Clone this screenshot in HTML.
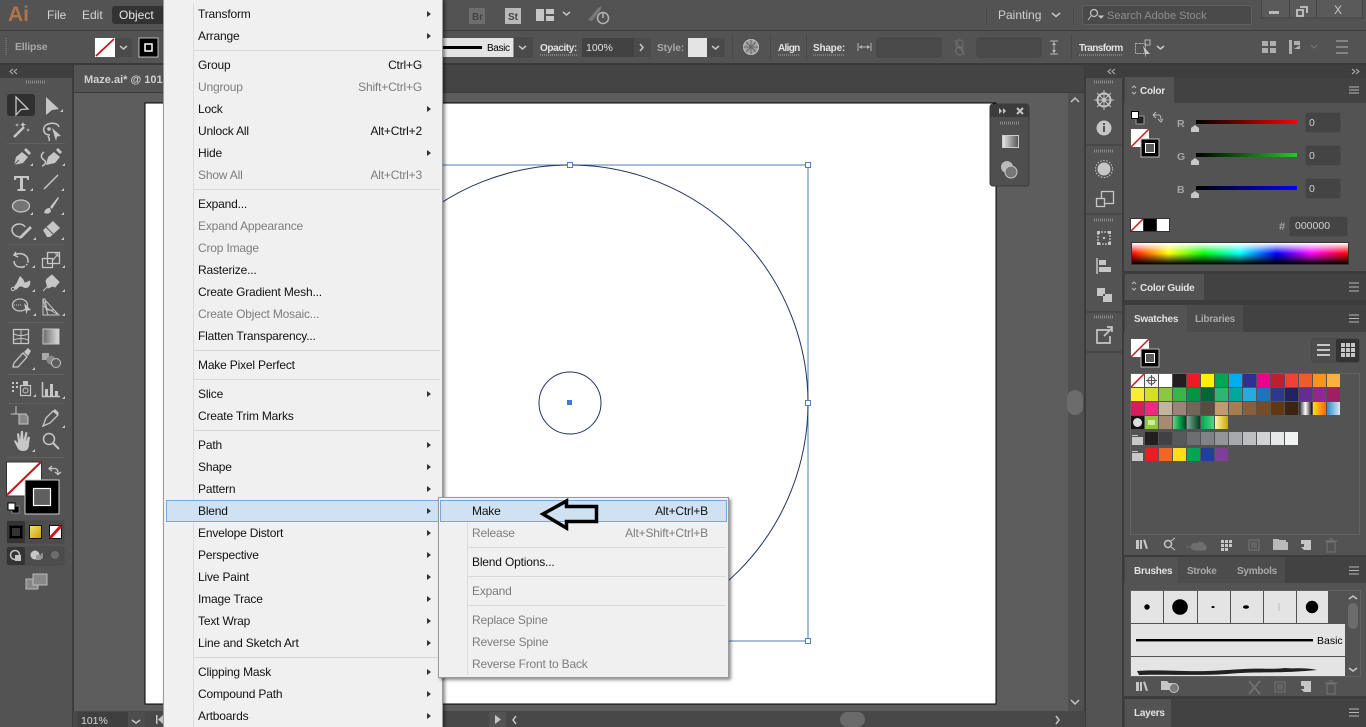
<!DOCTYPE html>
<html><head><meta charset="utf-8"><title>Illustrator</title>
<style>
html,body{margin:0;padding:0;width:1366px;height:727px;overflow:hidden;background:#535353}
svg{display:block;font-family:"Liberation Sans",sans-serif}
.m text{font-size:12px;fill:#111;letter-spacing:-.18px}
.m text.d{fill:#7d7d7d}
.m text.r{text-anchor:end}
.p{font-size:10px;font-weight:bold;fill:#e2e2e2;letter-spacing:-.25px}
.q{font-size:10px;font-weight:bold;fill:#a9a9a9;letter-spacing:-.25px}
.c{font-size:10.5px;fill:#d2d2d2}
.i{fill:none;stroke:#c6c6c6;stroke-width:1.5}
.f{fill:#c6c6c6}
.dim{fill:#777}
</style></head><body>
<svg width="1366" height="727" viewBox="0 0 1366 727" xmlns="http://www.w3.org/2000/svg">
<defs>
<linearGradient id="gr" x1="0" x2="1" y1="0" y2="0"><stop offset="0" stop-color="#000"/><stop offset="1" stop-color="#f00"/></linearGradient>
<linearGradient id="gg" x1="0" x2="1" y1="0" y2="0"><stop offset="0" stop-color="#000"/><stop offset="1" stop-color="#2c2"/></linearGradient>
<linearGradient id="gb" x1="0" x2="1" y1="0" y2="0"><stop offset="0" stop-color="#000"/><stop offset="1" stop-color="#00f"/></linearGradient>
<linearGradient id="hue" x1="0" x2="1" y1="0" y2="0"><stop offset="0" stop-color="#f00"/><stop offset=".17" stop-color="#ff0"/><stop offset=".33" stop-color="#0f0"/><stop offset=".5" stop-color="#0ff"/><stop offset=".67" stop-color="#00f"/><stop offset=".83" stop-color="#f0f"/><stop offset="1" stop-color="#f00"/></linearGradient>
<linearGradient id="wb" x1="0" x2="0" y1="0" y2="1"><stop offset="0" stop-color="#fff"/><stop offset=".5" stop-color="#fff" stop-opacity="0"/><stop offset=".5" stop-color="#000" stop-opacity="0"/><stop offset="1" stop-color="#000"/></linearGradient>
<linearGradient id="bw" x1="0" x2="1" y1="0" y2="0"><stop offset="0" stop-color="#222"/><stop offset=".5" stop-color="#fff"/><stop offset="1" stop-color="#111"/></linearGradient>
<linearGradient id="yo" x1="0" x2="1" y1="0" y2="0"><stop offset="0" stop-color="#ffe000"/><stop offset="1" stop-color="#f26522"/></linearGradient>
<linearGradient id="bt" x1="0" x2="1" y1="0" y2="0"><stop offset="0" stop-color="#2b8ad0"/><stop offset="1" stop-color="#dfe8ef"/></linearGradient>
<linearGradient id="gn" x1="0" x2="1" y1="0" y2="0"><stop offset="0" stop-color="#7ccb7c"/><stop offset=".5" stop-color="#00a651"/><stop offset="1" stop-color="#00451f"/></linearGradient>
<linearGradient id="tl" x1="0" x2="1" y1="0" y2="0"><stop offset="0" stop-color="#7aa894"/><stop offset="1" stop-color="#00401f"/></linearGradient>
<linearGradient id="gn2" x1="0" x2="1" y1="0" y2="0"><stop offset="0" stop-color="#00a651"/><stop offset="1" stop-color="#5fcf88"/></linearGradient>
<linearGradient id="yl" x1="0" x2="1" y1="0" y2="0"><stop offset="0" stop-color="#fff6b0"/><stop offset="1" stop-color="#c9a800"/></linearGradient>
<linearGradient id="yy" x1="0" x2="1" y1="0" y2="1"><stop offset="0" stop-color="#f7e27a"/><stop offset="1" stop-color="#c9a000"/></linearGradient>
<linearGradient id="gy" x1="0" x2="1" y1="0" y2="0"><stop offset="0" stop-color="#e8e8e8"/><stop offset="1" stop-color="#555"/></linearGradient>
<linearGradient id="gy2" x1="0" x2="1" y1="0" y2="0"><stop offset="0" stop-color="#6a6a6a"/><stop offset="1" stop-color="#ddd"/></linearGradient>
<filter id="sh" x="-10%" y="-10%" width="120%" height="120%"><feDropShadow dx="2" dy="2" stdDeviation="1.5" flood-color="#000" flood-opacity=".45"/></filter>
</defs>

<!-- base bars -->
<rect width="1366" height="727" fill="#535353"/>
<rect y="30" width="1366" height="1" fill="#3c3c3c"/>
<rect y="63" width="1366" height="2" fill="#3a3a3a"/>

<!-- canvas region -->
<rect x="73" y="65" width="1012" height="28" fill="#444"/>
<rect x="74" y="65" width="100" height="27" fill="#535353"/>
<rect x="73" y="92" width="1012" height="1" fill="#3c3c3c"/>
<rect x="73" y="93" width="995" height="618" fill="#5d5d5d"/>
<rect x="1068" y="93" width="17" height="618" fill="#505050"/>
<rect x="72" y="65" width="2" height="662" fill="#3c3c3c"/>
<rect x="1084" y="65" width="2" height="662" fill="#3c3c3c"/>
<rect x="73" y="711" width="1012" height="16" fill="#484848"/>
<rect x="145" y="103" width="851" height="601" fill="#fff" stroke="#000" stroke-width="1"/>
<text x="84" y="83" font-size="11" font-weight="bold" fill="#d0d0d0">Maze.ai* @ 101</text>

<!-- artwork -->
<g fill="none">
<rect x="332" y="165" width="476" height="476" stroke="#4f7fbc" stroke-width="1"/>
<circle cx="570" cy="403" r="238" stroke="#22335f" stroke-width="1"/>
<circle cx="570" cy="403" r="31" stroke="#22335f" stroke-width="1"/>
</g>
<g fill="#fff" stroke="#4f7fbc"><rect x="567.500" y="162.500" width="5" height="5"/><rect x="805.500" y="162.500" width="5" height="5"/><rect x="805.500" y="400.500" width="5" height="5"/><rect x="805.500" y="638.500" width="5" height="5"/></g>
<rect x="567" y="400" width="5" height="5" fill="#3f78e0"/>

<!-- scrollbars -->
<path d="M1071 102l4-4 4 4" class="i" stroke-width="1.2"/>
<path d="M1071 700l4 4 4-4" class="i" stroke-width="1.2"/>
<rect x="1067" y="390" width="16" height="25" rx="8" fill="#6c6c6c"/>
<rect x="78" y="712" width="50" height="15" fill="#3f3f3f"/>
<text x="81" y="724" font-size="10.500" fill="#d8d8d8">101%</text>
<rect x="128" y="712" width="17" height="15" fill="#4d4d4d"/>
<path d="M132 720l4 3 4-3" class="i" stroke-width="1.300"/>
<path d="M156 715v9h1.500v-9zM163 715l-5 4.500 5 4.500z" class="f"/>
<rect x="489" y="712" width="17" height="15" fill="#535353"/>
<path d="M495 715l6 4.500-6 4.500z" class="f"/>
<path d="M516 716l-3 4 3 4" class="i" stroke-width="1.200"/>
<path d="M1056 716l3 4-3 4" class="i" stroke-width="1.200"/>
<rect x="840" y="712" width="25" height="15" rx="7.500" fill="#6a6a6a"/>

<!-- top bar -->
<text x="8" y="21" font-size="21" font-weight="bold" fill="#b0744a">Ai</text>
<text x="47" y="19" font-size="12" fill="#d4d4d4">File</text>
<text x="82" y="19" font-size="12" fill="#d4d4d4">Edit</text>
<rect x="112" y="6" width="55" height="18" rx="3" fill="#333"/>
<text x="119" y="19" font-size="12" fill="#e6e6e6">Object</text>
<rect x="469" y="8" width="16" height="16" fill="#6d6d6d"/>
<text x="472" y="20" font-size="10" font-weight="bold" fill="#444">Br</text>
<rect x="505" y="8" width="16" height="16" fill="#b9b9b9"/>
<text x="508" y="20" font-size="10" font-weight="bold" fill="#444">St</text>
<path d="M536 9h8v12h-8zM546 9h8v5h-8zM546 16h8v5h-8z" class="f"/>
<path d="M563 12l3.500 3 3.500-3" class="i" stroke-width="1.300"/>
<path d="M588 20l10-12 4-2-2 5-8 10z" class="dim"/><circle cx="603" cy="18" r="5.500" fill="none" stroke="#b5b5b5" stroke-width="1.500"/><path d="M603 12v6" stroke="#b5b5b5" stroke-width="1.500"/>
<rect x="986" y="8" width="1" height="17" fill="#484848"/>
<text x="998" y="19" font-size="12" fill="#cfcfcf">Painting</text>
<path d="M1052 13l4 3.500 4-3.500" class="i" stroke-width="1.300"/>
<rect x="1073" y="8" width="1" height="17" fill="#484848"/>
<rect x="1082.500" y="5.500" width="169" height="19" rx="2" fill="#4a4a4a" stroke="#5f5f5f"/>
<circle cx="1094" cy="13" r="3.500" fill="none" stroke="#c4c4c4" stroke-width="1.200"/><path d="M1091 16l-3 4M1099 16h4l-2 2z" stroke="#c4c4c4" fill="#c4c4c4"/>
<text x="1107" y="19" font-size="11" fill="#8e8e8e">Search Adobe Stock</text>
<rect x="1261.500" y="-1" width="101" height="19" fill="#5a5a5a" stroke="#444"/>
<path d="M1289.500 0v18M1316.500 0v18" stroke="#444"/>
<rect x="1269" y="11" width="10" height="3" fill="#b8b8b8"/>
<path d="M1300 7h7v6M1297 10h6v6h-6z" fill="none" stroke="#c4c4c4" stroke-width="1.800"/>
<text x="1334" y="14" font-size="12" fill="#c8c8c8">X</text>

<!-- control bar -->
<path d="M6 38v18" stroke="#6e6e6e" stroke-width="2" stroke-dasharray="1 1"/>
<text x="15" y="50" font-size="10.500" font-weight="bold" fill="#a8a8a8" letter-spacing="-.2">Ellipse</text>
<rect x="95" y="38" width="20" height="19" fill="#fff"/><path d="M96 56l18-17" stroke="#c4161c" stroke-width="1.800"/>
<rect x="115" y="38" width="17" height="19" fill="#4a4a4a"/>
<path d="M120 46l3.500 3 3.500-3" class="i" stroke-width="1.300"/>
<rect x="139" y="38" width="19" height="19" fill="#000" stroke="#ddd" stroke-width=".8"/><rect x="145" y="44" width="7" height="7" fill="none" stroke="#fff" stroke-width="1.500"/>
<rect x="443" y="38" width="71" height="19" fill="#e4e4e4"/><rect x="443" y="46" width="39" height="3" fill="#000"/>
<text x="487" y="51" font-size="10" fill="#000" textLength="23">Basic</text>
<rect x="514" y="38" width="18" height="19" fill="#4a4a4a" stroke="#444"/><path d="M519 46l3.500 3 3.500-3" class="i" stroke-width="1.300"/>
<text x="540" y="51" class="p" textLength="37">Opacity:</text>
<path d="M540 55h37" stroke="#aaa" stroke-dasharray="1 1"/>
<rect x="582" y="38" width="52" height="19" fill="#424242"/>
<text x="586" y="51" font-size="10.500" fill="#e2e2e2">100%</text>
<rect x="634" y="38" width="17" height="19" fill="#4b4b4b"/><path d="M640 44l3 3.500-3 3.500" class="i" stroke-width="1.300"/>
<text x="657" y="51" class="q" textLength="27">Style:</text>
<rect x="688" y="38" width="19" height="19" fill="#e4e4e4"/>
<rect x="707" y="38" width="18" height="19" fill="#4a4a4a"/><path d="M712 46l3.500 3 3.500-3" class="i" stroke-width="1.300"/>
<rect x="732" y="34" width="1" height="26" fill="#484848"/>
<circle cx="751" cy="47" r="7.500" fill="#a0a0a0" stroke="#c8c8c8"/><path d="M743.500 47h15M751 39.500v15M746 42l10 10M756 42l-10 10" stroke="#666"/>
<rect x="770" y="34" width="1" height="26" fill="#484848"/>
<text x="778" y="51" class="p" textLength="22">Align</text><path d="M778 55h22" stroke="#aaa" stroke-dasharray="1 1"/>
<rect x="806" y="34" width="1" height="26" fill="#484848"/>
<text x="813" y="51" class="p" textLength="32">Shape:</text><path d="M813 55h32" stroke="#aaa" stroke-dasharray="1 1"/>
<path d="M858 43v8M871 43v8M859 47h11" stroke="#b5b5b5"/><path d="M859 47l3-2v4zM870 47l-3-2v4z" fill="#b5b5b5"/>
<rect x="877" y="38" width="64" height="19" rx="2" fill="#4a4a4a" stroke="#444"/>
<path d="M955 40l10 15" stroke="#707070" stroke-width="1"/><rect x="956" y="40" width="7" height="8" rx="3" fill="none" stroke="#707070"/><rect x="956" y="47" width="7" height="8" rx="3" fill="none" stroke="#707070"/>
<rect x="977" y="38" width="64" height="19" rx="2" fill="#4a4a4a" stroke="#444"/>
<path d="M1050 41h8M1050 54h8M1054 41v13" stroke="#b5b5b5"/><path d="M1054 42l-2 3h4zM1054 53l-2-3h4z" fill="#b5b5b5"/>
<rect x="1071" y="34" width="1" height="26" fill="#484848"/>
<text x="1079" y="51" class="p" textLength="44">Transform</text><path d="M1079 55h44" stroke="#aaa" stroke-dasharray="1 1"/>
<rect x="1135.500" y="43.500" width="10" height="10" fill="none" stroke="#b5b5b5" stroke-dasharray="2 1"/><path d="M1143 46l7 8-4 0 0 4z" class="f"/><rect x="1145" y="40" width="5" height="5" fill="none" stroke="#b5b5b5"/>
<path d="M1157 46l3.500 3 3.500-3" class="i" stroke-width="1.300"/>
<path d="M1262 41h6v5h-6zM1270 41h6v5h-6zM1262 48h6v5h-6zM1270 48h6v5h-6z" class="f" opacity=".8"/>
<path d="M1289 40h3v14h-3zM1294 41h6v4h-6zM1294 49h6v-4" class="f" opacity=".8"/>
<path d="M1311 45l3 3 3-3" stroke="#777" fill="none"/>
<path d="M1336 41h12M1336 47h12M1336 53h12" stroke="#b5b5b5"/>

<!-- left toolbar -->
<rect y="65" width="72" height="13" fill="#3f3f3f"/>
<path d="M13 69l-3 2.500 3 2.500M17 69l-3 2.500 3 2.500" stroke="#b5b5b5" fill="none"/>
<path d="M26 82h20" stroke="#8a8a8a" stroke-width="3" stroke-dasharray="1 1"/>
<rect x="7" y="94" width="28" height="22" rx="3" fill="#303030"/>
<path d="M16 97l12 12-7 .5-5 5.500z" fill="none" stroke="#c8c8c8" stroke-width="1.300"/>
<path d="M46 97l13 12-7 1-6 5z" class="f"/>
<path d="M60 112l3-3v3z" class="f"/>
<!-- wand -->
<path d="M14 137l10-10" stroke="#c6c6c6" stroke-width="2.500"/><path d="M23 122l1 2 2 .5-2 1-1 2-1-2-2-1 2-.5zM17 123l.5 1.500 1.500.5-1.500.5-.5 1.500-.5-1.500-1.500-.5 1.500-.5zM28 128l.5 1.500 1.500.5-1.500.5-.5 1.500-.5-1.500-1.500-.5 1.500-.5z" class="f"/>
<!-- lasso -->
<path d="M50 135c-7 0-8-7-4-10 5-3 12-2 13 2M48 136c1 2 2 3 1 5" class="i"/><circle cx="49" cy="129" r="1.800" class="f"/><path d="M52 128l9 8-4 .5-1 4.500z" class="f"/>
<rect x="7" y="143" width="58" height="1" fill="#606060"/>
<!-- pen -->
<path d="M14 165l2-8 6-5 6 5-5 6zM24 150l2-2 5 5-2 2z" class="f"/><path d="M14 165l5-5" stroke="#535353"/><path d="M30 166l3-3v3z" class="f"/>
<path d="M46 165l2-8 6-5 6 5-5 6zM56 150l2-2 4 4-2 2z" class="f"/><path d="M44 152c-4 3-3 6 0 8s1 5-2 6" class="i"/><path d="M62 166l3-3v3z" class="f"/>
<!-- type -->
<path d="M14 176h15v4h-1.500l-1-2H23v11h2.500v2h-8v-2H20v-11h-3.500l-1 2H14z" class="f"/><path d="M30 191l3-3v3z" class="f"/>
<path d="M44 189l14-14" class="i"/><path d="M61 191l3-3v3z" class="f"/>
<!-- ellipse & brush -->
<ellipse cx="21" cy="206" rx="8.500" ry="6" fill="#757575" stroke="#c6c6c6" stroke-width="1.300"/><path d="M30 215l3-3v3z" class="f"/>
<path d="M44 213c1-4 3-5 6-5l1 3c-1 3-4 3-7 2zM50 207l8-10 1 1-7 11z" class="f"/><path d="M61 215l3-3v3z" class="f"/>
<!-- shaper & eraser -->
<path d="M21 237c-7 0-9-5-9-7 0-4 4-6 7-6s5 1 6 3" class="i" stroke-width="2"/><path d="M20 236l10-10 2 2-10 10-3 1z" class="f"/><path d="M33 240l3-3v3z" class="f"/>
<path d="M43 230l10-9 7 7-10 9h-3z" class="f"/><path d="M46 227l7 7" stroke="#535353"/><path d="M61 240l3-3v3z" class="f"/>
<rect x="7" y="244" width="58" height="1" fill="#606060"/>
<!-- rotate & scale -->
<path d="M16 252l-2 3 4 2M14 255c6-3 14-1 14 6 0 4-4 7-8 6-4 0-6-3-6-6" class="i" stroke-dasharray="20 1.500 1.500 1.500"/><path d="M32 268l3-3v3z" class="f"/>
<rect x="42.500" y="258.500" width="10" height="9" fill="none" stroke="#c6c6c6" stroke-width="1.300"/><rect x="47.500" y="252.500" width="12" height="11" fill="none" stroke="#c6c6c6" stroke-width="1.300"/><path d="M53 260l5-6M55 254h3v3" stroke="#c6c6c6" fill="none"/><path d="M62 268l3-3v3z" class="f"/>
<!-- warp & pin -->
<path d="M14 288c0-3 3-4 4-8l2-4 3 3 2 4 5-2c1 3-1 7-4 7s-4-3-7-1l-3 3z" class="f"/><path d="M13 289l17-8" stroke="#c6c6c6"/><circle cx="13" cy="289" r="1.700" fill="#535353" stroke="#c6c6c6"/><path d="M32 292l3-3v3z" class="f"/>
<path d="M43 291l6-6M47 279l5-4 7 7-4 5-2-1-5 2-2-7z" class="f" stroke="#c6c6c6"/><path d="M62 292l3-3v3z" class="f"/>
<!-- shape builder & perspective -->
<ellipse cx="20" cy="305" rx="7.500" ry="6" fill="none" stroke="#c6c6c6" stroke-width="1.300"/><path d="M14 305h8" stroke="#c6c6c6" stroke-dasharray="1 1"/><path d="M24 303l7 7-3.500.5-1 4z" class="f"/><path d="M33 316l3-3v3z" class="f"/>
<path d="M43 299v16h16l-5-5H47l-2-11zM43 299l5 16M43 306l14 8M46 301l8 9" fill="none" stroke="#c6c6c6"/><path d="M62 316l3-3v3z" class="f"/>
<rect x="7" y="322" width="58" height="1" fill="#606060"/>
<!-- mesh & gradient -->
<rect x="13.500" y="329.500" width="15" height="14" fill="none" stroke="#c6c6c6" stroke-width="1.300"/><path d="M21 330v13M14 334c4 2 10 2 14 0M14 340c4-2 10-2 14 0" stroke="#c6c6c6" fill="none"/>
<rect x="43" y="329" width="16" height="15" fill="url(#gy2)" stroke="#c6c6c6"/>
<!-- eyedropper & blend -->
<path d="M13 367l1-4 9-10 4 4-9 10z" fill="none" stroke="#c6c6c6" stroke-width="1.300"/><path d="M24 352l4-4 3 3-3 5z" class="f"/><path d="M32 370l3-3v3z" class="f"/>
<rect x="42" y="353" width="7" height="7" fill="#aaa"/><circle cx="51" cy="360" r="4.500" fill="#888"/><circle cx="56" cy="363" r="4.500" fill="#5d5d5d" stroke="#c6c6c6"/>
<rect x="7" y="374" width="58" height="1" fill="#606060"/>
<!-- sprayer & graph -->
<path d="M12 382h2v2h-2zM16 382h2v2h-2zM12 386h2v2h-2zM16 386h2v2h-2zM12 390h2v2h-2z" class="f"/><rect x="20.500" y="385.500" width="10" height="10" fill="none" stroke="#c6c6c6" stroke-width="1.200"/><path d="M23 381h5v4h-5z" class="f"/><circle cx="25.500" cy="390.500" r="2.500" fill="none" stroke="#c6c6c6"/><path d="M33 397l3-3v3z" class="f"/>
<path d="M42.500 382v14.500H60" class="i"/><path d="M45 389h3v7h-3zM50 384h3v12h-3zM55 391h3v5h-3z" class="f"/><path d="M62 399l3-3v3z" class="f"/>
<rect x="7" y="403" width="58" height="1" fill="#606060"/>
<!-- artboard & slice -->
<path d="M16 406v8M11 414h8" stroke="#c6c6c6"/><path d="M19 414h7l2 3v7h-9z" fill="#888" stroke="#c6c6c6"/>
<path d="M43 426l3-8 7-7 5 4-8 8z" fill="none" stroke="#c6c6c6" stroke-width="1.300"/><path d="M53 411l2-2 4 4-2 2z" class="f"/><path d="M62 428l3-3v3z" class="f"/>
<!-- hand & zoom -->
<path d="M14 441l1-1 3 3-1-9 2-1 1 7 1-9h2l.5 9 2-8 2 .5-1.500 9 2-5 2 .5-1 7c0 5-2 7-6 7s-5-2-6-4z" class="f"/><path d="M32 452l3-3v3z" class="f"/>
<circle cx="49" cy="439" r="5.500" fill="none" stroke="#c6c6c6" stroke-width="1.500"/><path d="M53 443l6 6" stroke="#c6c6c6" stroke-width="2"/>
<rect x="7" y="457" width="58" height="1" fill="#606060"/>
<!-- fill/stroke -->
<rect x="6.500" y="462" width="35" height="34" fill="#fff" stroke="#333"/>
<path d="M7 495l34-33" stroke="#c4161c" stroke-width="2"/>
<path d="M52 466l-3 2.500 3 2.500M49 468.500h6c2 0 3 2 3 5M55 472l3 2.500 3-2.500" fill="none" stroke="#c6c6c6" stroke-width="1.300"/>
<rect x="25" y="480" width="34" height="34" fill="#000" stroke="#ccc"/>
<rect x="33.500" y="488.500" width="17" height="17" fill="#5f5f5f" stroke="#fff" stroke-width="1.200"/>
<rect x="12" y="506" width="7" height="7" fill="#000" stroke="#999" stroke-width=".7"/><rect x="8" y="503" width="7" height="7" fill="#fff" stroke="#000"/>
<!-- colour modes -->
<rect x="7" y="521" width="57" height="22" rx="2" fill="#4c4c4c" stroke="#484848"/>
<rect x="7" y="521" width="18" height="22" rx="2" fill="#343434"/>
<rect x="9.500" y="525.500" width="13" height="13" fill="#000" stroke="#222"/><rect x="12" y="528" width="8" height="8" fill="#333"/>
<rect x="29.500" y="525.500" width="12" height="13" fill="url(#yy)" stroke="#111"/>
<rect x="49.500" y="525.500" width="12" height="13" fill="#fff" stroke="#111"/><path d="M50 538l11-12" stroke="#d2141c" stroke-width="3"/>
<!-- draw modes -->
<rect x="7" y="547" width="57" height="18" rx="2" fill="#4c4c4c" stroke="#484848"/>
<rect x="7" y="547" width="18" height="18" rx="2" fill="#343434"/>
<circle cx="15" cy="555" r="4.500" fill="none" stroke="#c6c6c6" stroke-width="1.500"/><rect x="15" y="555" width="6" height="6" class="f"/>
<circle cx="35" cy="555" r="4.500" class="f"/><path d="M37 558h5v-5" fill="none" stroke="#c6c6c6"/><rect x="36" y="555" width="5" height="5" fill="#999"/>
<circle cx="55" cy="555" r="4" fill="#6d6d6d"/>
<!-- screen mode -->
<rect x="26" y="579" width="12" height="10" fill="#888" stroke="#bbb"/><rect x="33" y="574" width="14" height="11" fill="#888" stroke="#bbb"/>

<!-- right dock -->
<rect x="1086" y="65" width="280" height="13" fill="#3e3e3e"/>
<path d="M1111 69l-3 2.500 3 2.500M1115 69l-3 2.500 3 2.500M1352 69l3 2.500-3 2.500M1356 69l3 2.500-3 2.500" stroke="#b5b5b5" fill="none"/>
<rect x="1122" y="78" width="2" height="649" fill="#3c3c3c"/>
<path d="M1094 82h20M1094 151h20M1094 220h20M1094 317h20" stroke="#8a8a8a" stroke-width="3" stroke-dasharray="1 1"/>
<path d="M1086 145h36M1086 214h36M1086 312h36M1086 352h36" stroke="#3c3c3c"/>
<!-- wheel -->
<circle cx="1104" cy="100" r="6.500" fill="none" stroke="#c6c6c6" stroke-width="2"/><circle cx="1104" cy="100" r="2" class="f"/><path d="M1104 90v20M1094 100h20M1097 93l14 14M1111 93l-14 14" stroke="#c6c6c6"/>
<circle cx="1104" cy="128" r="7.500" class="f"/><path d="M1103 126h2v6h-2zM1103 123h2v2h-2z" fill="#535353"/>
<circle cx="1104" cy="169" r="6.500" class="f"/><circle cx="1104" cy="169" r="8.500" fill="none" stroke="#c6c6c6" stroke-dasharray="1.500 1.500"/>
<rect x="1101.500" y="191.500" width="12" height="12" fill="none" stroke="#c6c6c6" stroke-width="1.300"/><rect x="1096.500" y="198.500" width="8" height="8" fill="#535353" stroke="#c6c6c6" stroke-width="1.300"/>
<rect x="1098" y="232" width="12" height="12" fill="none" stroke="#c6c6c6" stroke-dasharray="2 1" stroke-width="1.300"/><path d="M1097 231h3v3h-3zM1108 231h3v3h-3zM1097 242h3v3h-3zM1108 242h3v3h-3zM1103 237h2v2h-2z" class="f"/>
<path d="M1097 258v16" class="i"/><path d="M1099 260h7v5h-7zM1099 267h12v5h-12z" class="f"/>
<path d="M1097 288h8v8h-8z" class="f"/><path d="M1103 294h9v8h-9z" class="f"/><rect x="1103" y="294" width="2" height="2" fill="#535353"/>
<path d="M1110 330h-13v13h13v-7M1104 336l8-8M1107 327h5v5" fill="none" stroke="#c6c6c6" stroke-width="1.700"/>

<!-- color panel -->
<rect x="1124" y="78" width="242" height="25" fill="#424242"/>
<rect x="1125" y="77" width="49" height="26" fill="#535353"/>
<path d="M1132 88l2-2 2 2M1132 92l2 2 2-2" fill="none" stroke="#bbb"/>
<text x="1140" y="94" class="p">Color</text>
<path d="M1349 87h10M1349 90h10M1349 93h10" stroke="#b5b5b5"/>
<rect x="1130.500" y="128.500" width="19" height="19" fill="#fff" stroke="#555"/><path d="M1131 147l18-18" stroke="#c4161c" stroke-width="1.500"/>
<rect x="1141" y="139" width="18" height="18" fill="#000" stroke="#bbb"/><rect x="1145.500" y="143.500" width="9" height="9" fill="#5a5a5a" stroke="#fff"/>
<rect x="1136" y="116" width="8" height="8" fill="#222" stroke="#999"/><rect x="1131.500" y="111.500" width="7" height="7" fill="#fff" stroke="#000"/>
<path d="M1153 115l3-3M1153 115l3 3M1153 115h6c1 0 2 1 2 5M1158 119l3 3 2-3" fill="none" stroke="#bbb"/>
<text x="1177" y="127" font-size="10.500" font-weight="bold" fill="#a5a5a5">R</text>
<text x="1177" y="160" font-size="10.500" font-weight="bold" fill="#a5a5a5">G</text>
<text x="1177" y="193" font-size="10.500" font-weight="bold" fill="#a5a5a5">B</text>
<rect x="1196" y="120" width="101" height="4" fill="url(#gr)"/>
<rect x="1196" y="153" width="101" height="4" fill="url(#gg)"/>
<rect x="1196" y="186" width="101" height="4" fill="url(#gb)"/>
<path d="M1191 132v-4l4-3 4 3v4z" fill="#c8c8c8"/><path d="M1191 165v-4l4-3 4 3v4z" fill="#c8c8c8"/><path d="M1191 198v-4l4-3 4 3v4z" fill="#c8c8c8"/>
<g fill="#444" stroke="#4d4d4d"><rect x="1305.500" y="112.500" width="35" height="20" rx="2"/><rect x="1305.500" y="145.500" width="35" height="20" rx="2"/><rect x="1305.500" y="178.500" width="35" height="20" rx="2"/><rect x="1289.500" y="216.500" width="58" height="20" rx="2"/></g>
<g class="c" font-size="10.500" fill="#d8d8d8"><text x="1309" y="126">0</text><text x="1309" y="159">0</text><text x="1309" y="192">0</text><text x="1295" y="229">000000</text></g>
<text x="1279" y="230" font-size="11" font-weight="bold" fill="#a5a5a5">#</text>
<rect x="1130.500" y="218.500" width="13" height="13" fill="#fff" stroke="#333"/><path d="M1131 231l12-12" stroke="#c4161c" stroke-width="1.500"/>
<rect x="1143.500" y="218.500" width="13" height="13" fill="#000" stroke="#333"/>
<rect x="1156.500" y="218.500" width="13" height="13" fill="#fff" stroke="#333"/>
<rect x="1132" y="243" width="216" height="21" fill="url(#hue)"/>
<rect x="1132" y="243" width="216" height="21" fill="url(#wb)"/>
<rect x="1131.500" y="242.500" width="217" height="22" fill="none" stroke="#333"/>
<rect x="1124" y="271" width="242" height="3" fill="#3c3c3c"/>

<!-- color guide -->
<rect x="1124" y="274" width="242" height="26" fill="#424242"/>
<rect x="1125" y="274" width="79" height="26" fill="#535353"/>
<path d="M1132 284l2-2 2 2M1132 288l2 2 2-2" fill="none" stroke="#bbb"/>
<text x="1140" y="291" class="p">Color Guide</text>
<path d="M1349 283h10M1349 287h10M1349 291h10" stroke="#b5b5b5"/>
<rect x="1124" y="300" width="242" height="5" fill="#3c3c3c"/>

<!-- swatches -->
<rect x="1124" y="305" width="242" height="27" fill="#424242"/>
<rect x="1125" y="305" width="62" height="27" fill="#535353"/>
<rect x="1187" y="305" width="56" height="27" fill="#4c4c4c"/>
<text x="1134" y="322" class="p">Swatches</text>
<text x="1195" y="322" class="q">Libraries</text>
<path d="M1349 315h10M1349 318.500h10M1349 322h10" stroke="#b5b5b5"/>
<rect x="1130.500" y="338.500" width="19" height="19" fill="#fff" stroke="#555"/><path d="M1131 357l18-18" stroke="#c4161c" stroke-width="1.500"/>
<rect x="1141" y="349" width="18" height="18" fill="#000" stroke="#bbb"/><rect x="1145.500" y="353.500" width="9" height="9" fill="#5a5a5a" stroke="#fff"/>
<rect x="1311.500" y="338.500" width="48" height="24" rx="3" fill="#4d4d4d" stroke="#484848"/>
<rect x="1336" y="339" width="23" height="23" rx="2" fill="#333"/>
<path d="M1317 344h13v2h-13zM1317 349h13v2h-13zM1317 354h13v2h-13z" class="f"/>
<path d="M1341 343h4v4h-4zM1346 343h4v4h-4zM1351 343h4v4h-4zM1341 348h4v4h-4zM1346 348h4v4h-4zM1351 348h4v4h-4zM1341 353h4v4h-4zM1346 353h4v4h-4zM1351 353h4v4h-4z" class="f"/>
<rect x="1130.500" y="373.500" width="229" height="161" fill="none" stroke="#626262"/>
<!-- row 1 -->
<rect x="1131" y="374" width="13" height="13" fill="#fff"/><path d="M1131 387l13-13" stroke="#c4161c" stroke-width="1.500"/>
<rect x="1145" y="374" width="13" height="13" fill="#f4f4f4"/><circle cx="1151.500" cy="380.500" r="3.500" fill="none" stroke="#555"/><path d="M1146 380.500h11M1151.500 375v11" stroke="#555"/>
<g>
<rect x="1159" y="374" width="13" height="13" fill="#fff"/><rect x="1173" y="374" width="13" height="13" fill="#231f20"/><rect x="1187" y="374" width="13" height="13" fill="#ed1c24"/><rect x="1201" y="374" width="13" height="13" fill="#fff200"/><rect x="1215" y="374" width="13" height="13" fill="#00a651"/><rect x="1229" y="374" width="13" height="13" fill="#00aeef"/><rect x="1243" y="374" width="13" height="13" fill="#2e3192"/><rect x="1257" y="374" width="13" height="13" fill="#ec008c"/><rect x="1271" y="374" width="13" height="13" fill="#be1e2d"/><rect x="1285" y="374" width="13" height="13" fill="#ef4136"/><rect x="1299" y="374" width="13" height="13" fill="#f15a29"/><rect x="1313" y="374" width="13" height="13" fill="#f7941d"/><rect x="1327" y="374" width="13" height="13" fill="#fbb040"/>
<!-- row 2 -->
<rect x="1131" y="388" width="13" height="13" fill="#f9ed32"/><rect x="1145" y="388" width="13" height="13" fill="#d7df23"/><rect x="1159" y="388" width="13" height="13" fill="#8dc63f"/><rect x="1173" y="388" width="13" height="13" fill="#39b54a"/><rect x="1187" y="388" width="13" height="13" fill="#009444"/><rect x="1201" y="388" width="13" height="13" fill="#006838"/><rect x="1215" y="388" width="13" height="13" fill="#2bb673"/><rect x="1229" y="388" width="13" height="13" fill="#00a79d"/><rect x="1243" y="388" width="13" height="13" fill="#27aae1"/><rect x="1257" y="388" width="13" height="13" fill="#1c75bc"/><rect x="1271" y="388" width="13" height="13" fill="#2b3990"/><rect x="1285" y="388" width="13" height="13" fill="#262262"/><rect x="1299" y="388" width="13" height="13" fill="#662d91"/><rect x="1313" y="388" width="13" height="13" fill="#92278f"/><rect x="1327" y="388" width="13" height="13" fill="#9e1f63"/>
<!-- row 3 -->
<rect x="1131" y="402" width="13" height="13" fill="#da1c5c"/><rect x="1145" y="402" width="13" height="13" fill="#ee2a7b"/><rect x="1159" y="402" width="13" height="13" fill="#c2b59b"/><rect x="1173" y="402" width="13" height="13" fill="#9b8579"/><rect x="1187" y="402" width="13" height="13" fill="#726658"/><rect x="1201" y="402" width="13" height="13" fill="#594a42"/><rect x="1215" y="402" width="13" height="13" fill="#c49a6c"/><rect x="1229" y="402" width="13" height="13" fill="#a97c50"/><rect x="1243" y="402" width="13" height="13" fill="#8b5e3c"/><rect x="1257" y="402" width="13" height="13" fill="#754c29"/><rect x="1271" y="402" width="13" height="13" fill="#603913"/><rect x="1285" y="402" width="13" height="13" fill="#3c2415"/><rect x="1299" y="402" width="13" height="13" fill="url(#bw)"/><rect x="1313" y="402" width="13" height="13" fill="url(#yo)"/><rect x="1327" y="402" width="13" height="13" fill="url(#bt)"/>
<!-- row 4 -->
<rect x="1131" y="416" width="13" height="13" fill="#111"/><circle cx="1137.500" cy="422.500" r="4.500" fill="#ddd"/><rect x="1145" y="416" width="13" height="13" fill="#8dc63f"/><rect x="1148" y="420" width="7" height="5" fill="#d8e8a0"/><rect x="1159" y="416" width="13" height="13" fill="#a88a70"/><rect x="1173" y="416" width="13" height="13" fill="url(#gn)"/><rect x="1187" y="416" width="13" height="13" fill="url(#tl)"/><rect x="1201" y="416" width="13" height="13" fill="url(#gn2)"/><rect x="1215" y="416" width="13" height="13" fill="url(#yl)"/>
<!-- row 5 -->
<path d="M1132 435h6v1h-6zM1132 437h11v8h-11z" fill="#c8c8c8"/>
<rect x="1145" y="432" width="13" height="13" fill="#231f20"/><rect x="1159" y="432" width="13" height="13" fill="#414042"/><rect x="1173" y="432" width="13" height="13" fill="#58595b"/><rect x="1187" y="432" width="13" height="13" fill="#6d6e71"/><rect x="1201" y="432" width="13" height="13" fill="#808285"/><rect x="1215" y="432" width="13" height="13" fill="#939598"/><rect x="1229" y="432" width="13" height="13" fill="#a7a9ac"/><rect x="1243" y="432" width="13" height="13" fill="#bcbec0"/><rect x="1257" y="432" width="13" height="13" fill="#d1d3d4"/><rect x="1271" y="432" width="13" height="13" fill="#e6e7e8"/><rect x="1285" y="432" width="13" height="13" fill="#f1f2f2"/>
<!-- row 6 -->
<path d="M1132 451h6v1h-6zM1132 453h11v8h-11z" fill="#c8c8c8"/>
<rect x="1145" y="448" width="13" height="13" fill="#ed1c24"/><rect x="1159" y="448" width="13" height="13" fill="#f26522"/><rect x="1173" y="448" width="13" height="13" fill="#ffde17"/><rect x="1187" y="448" width="13" height="13" fill="#00a651"/><rect x="1201" y="448" width="13" height="13" fill="#21409a"/><rect x="1215" y="448" width="13" height="13" fill="#7f3f98"/>
</g>
<!-- swatch bottom icons -->
<path d="M1136 540h3v9h-3zM1140 540h2v9h-2zM1143 540l2-.5 3 9-2 .5z" class="f"/>
<circle cx="1168" cy="544" r="3.500" fill="none" stroke="#c6c6c6" stroke-width="1.500"/><path d="M1171 541l4-3M1171 547l4 3" stroke="#c6c6c6"/>
<path d="M1186 547h8M1192 549c-2-4 2-7 5-5 2-3 7-2 7 1 3 0 3 5 0 5h-10z" fill="#6f6f6f" stroke="#6f6f6f"/>
<path d="M1221 540h3v3h-3zM1225 540h3v3h-3zM1229 540h3v3h-3zM1221 544h3v3h-3zM1225 544h3v3h-3zM1229 544h3v3h-3zM1221 548h3v3h-3zM1225 548h3v3h-3z" class="f"/>
<rect x="1249" y="540" width="10" height="10" fill="none" stroke="#757575"/><path d="M1251 543h6M1251 545h6M1251 547h6" stroke="#757575"/>
<path d="M1273 539h6v1h7v2h2v8h-15z" fill="#b9b9b9"/>
<path d="M1301 539h10v10h-7l-3-3h3v-3h-3z" class="f" transform="translate(0,1)"/>
<rect x="1327" y="542" width="8" height="10" fill="none" stroke="#757575"/><path d="M1325 541h12M1329 539h4" stroke="#757575"/>
<rect x="1124" y="555" width="242" height="2" fill="#3c3c3c"/>

<!-- brushes -->
<rect x="1124" y="557" width="242" height="26" fill="#424242"/>
<rect x="1125" y="557" width="53" height="26" fill="#535353"/>
<rect x="1178" y="557" width="50" height="26" fill="#4c4c4c"/>
<rect x="1228" y="557" width="57" height="26" fill="#4c4c4c"/>
<text x="1134" y="574" class="p">Brushes</text>
<text x="1187" y="574" class="q">Stroke</text>
<text x="1237" y="574" class="q">Symbols</text>
<path d="M1349 567h10M1349 570.500h10M1349 574h10" stroke="#b5b5b5"/>
<rect x="1130.500" y="590.500" width="230" height="86" fill="none" stroke="#626262"/>
<g fill="#e4e4e4">
<rect x="1131" y="591" width="32" height="32"/><rect x="1164" y="591" width="33" height="32"/><rect x="1198" y="591" width="32" height="32"/><rect x="1231" y="591" width="32" height="32"/><rect x="1264" y="591" width="32" height="32"/><rect x="1297" y="591" width="31" height="32"/>
<rect x="1131" y="624" width="214" height="32"/><rect x="1131" y="657" width="214" height="19"/>
</g>
<circle cx="1147" cy="607" r="2.700"/><circle cx="1180" cy="607" r="7.800"/><ellipse cx="1213" cy="607" rx="1.600" ry="1"/><ellipse cx="1246" cy="607" rx="3" ry="1.800"/><path d="M1279 603v8" stroke="#bbb"/><circle cx="1312" cy="607" r="6.200"/>
<rect x="1136" y="639" width="177" height="2.400"/>
<text x="1317" y="644" font-size="10.500" fill="#000">Basic</text>
<path d="M1137 671c30-2 50 2 90-1s40 0 58-2c10 1 20-1 32 2-40 4-60 1-90 4-30 2-60 0-88 1z" fill="#222"/>
<path d="M1349 599l4-3 4 3" class="i" stroke-width="1.200"/>
<rect x="1348" y="603" width="10" height="26" rx="5" fill="#6c6c6c"/>
<path d="M1349 668l4 3 4-3" class="i" stroke-width="1.200"/>
<path d="M1136 682h3v9h-3zM1140 682h2v9h-2zM1143 682l2-.5 3 9-2 .5z" class="f"/>
<path d="M1161 681h6l2 2h4v7h-12z" class="f"/><circle cx="1174" cy="688" r="4.500" fill="#7a7a7a" stroke="#c6c6c6"/>
<path d="M1249 681l11 13M1260 681l-11 13" stroke="#6f6f6f" stroke-width="2"/>
<rect x="1275" y="682" width="10" height="10" fill="none" stroke="#757575"/><path d="M1277 685h6M1277 687h6M1277 689h6" stroke="#757575"/>
<path d="M1301 681h10v11h-7l-3-3h3v-3h-3z" class="f"/>
<rect x="1327" y="684" width="8" height="10" fill="none" stroke="#757575"/><path d="M1325 683h12M1329 681h4" stroke="#757575"/>
<rect x="1124" y="696" width="242" height="3" fill="#3c3c3c"/>

<!-- layers -->
<rect x="1124" y="699" width="242" height="28" fill="#424242"/>
<rect x="1125" y="699" width="46" height="28" fill="#535353"/>
<text x="1134" y="716" class="p">Layers</text>
<path d="M1349 709h10M1349 712.500h10M1349 716h10" stroke="#b5b5b5"/>

<!-- floating panel -->
<rect x="990" y="104" width="39" height="82" rx="3" fill="#4f4f4f" stroke="#3a3a3a"/>
<path d="M990 117v-10q0-3 3-3h33q3 0 3 3v10z" fill="#3c3c3c"/>
<path d="M999 108l3 3-3 3zM1003 108l3 3-3 3z" fill="#c6c6c6"/>
<path d="M1017 108l6 6M1023 108l-6 6" stroke="#c6c6c6" stroke-width="2"/>
<path d="M1000 123h19" stroke="#8a8a8a" stroke-width="3" stroke-dasharray="1 1"/>
<rect x="1002.500" y="135.500" width="16" height="12" fill="url(#gy)" stroke="#ccc"/>
<circle cx="1007" cy="167" r="6" fill="#bbb"/><circle cx="1011" cy="172" r="6" fill="#777" stroke="#ccc"/>

<!-- object menu -->
<g filter="url(#sh)"><rect x="163.500" y="-2" width="279" height="732" fill="#f0f0f0" stroke="#9a9a9a"/></g>
<path d="M193.500 3V727" stroke="#dcdcdc"/>
<g fill="#d8d8d8"><rect x="194" y="50" width="246" height="1"/><rect x="194" y="189" width="246" height="1"/><rect x="194" y="350" width="246" height="1"/><rect x="194" y="379" width="246" height="1"/><rect x="194" y="430" width="246" height="1"/><rect x="194" y="657" width="246" height="1"/></g>
<rect x="166.500" y="500.500" width="272" height="21" fill="#cfe1f3" stroke="#7aa7d8"/>
<g class="m">
<text x="198" y="18">Transform</text>
<text x="198" y="40">Arrange</text>
<text x="198" y="69">Group</text><text class="r" x="422" y="69">Ctrl+G</text>
<text class="d" x="198" y="91">Ungroup</text><text class="d r" x="422" y="91">Shift+Ctrl+G</text>
<text x="198" y="113">Lock</text>
<text x="198" y="135">Unlock All</text><text class="r" x="422" y="135">Alt+Ctrl+2</text>
<text x="198" y="157">Hide</text>
<text class="d" x="198" y="179">Show All</text><text class="d r" x="422" y="179">Alt+Ctrl+3</text>
<text x="198" y="208">Expand...</text>
<text class="d" x="198" y="230">Expand Appearance</text>
<text class="d" x="198" y="252">Crop Image</text>
<text x="198" y="274">Rasterize...</text>
<text x="198" y="296">Create Gradient Mesh...</text>
<text class="d" x="198" y="318">Create Object Mosaic...</text>
<text x="198" y="340">Flatten Transparency...</text>
<text x="198" y="369">Make Pixel Perfect</text>
<text x="198" y="398">Slice</text>
<text x="198" y="420">Create Trim Marks</text>
<text x="198" y="449">Path</text>
<text x="198" y="471">Shape</text>
<text x="198" y="493">Pattern</text>
<text x="198" y="515">Blend</text>
<text x="198" y="537">Envelope Distort</text>
<text x="198" y="559">Perspective</text>
<text x="198" y="581">Live Paint</text>
<text x="198" y="603">Image Trace</text>
<text x="198" y="625">Text Wrap</text>
<text x="198" y="647">Line and Sketch Art</text>
<text x="198" y="676">Clipping Mask</text>
<text x="198" y="698">Compound Path</text>
<text x="198" y="720">Artboards</text>
</g>
<g fill="#333">
<path d="M427 11l4 3-4 3zM427 33l4 3-4 3zM427 106l4 3-4 3zM427 150l4 3-4 3zM427 391l4 3-4 3zM427 442l4 3-4 3zM427 464l4 3-4 3zM427 486l4 3-4 3zM427 508l4 3-4 3zM427 530l4 3-4 3zM427 552l4 3-4 3zM427 574l4 3-4 3zM427 596l4 3-4 3zM427 618l4 3-4 3zM427 640l4 3-4 3zM427 669l4 3-4 3zM427 691l4 3-4 3zM427 713l4 3-4 3z"/>
</g>

<!-- blend submenu -->
<g filter="url(#sh)"><rect x="438.500" y="497.500" width="290" height="180" fill="#f0f0f0" stroke="#9a9a9a"/></g>
<path d="M467.500 500V675" stroke="#dcdcdc"/>
<g fill="#d8d8d8"><rect x="468" y="547" width="258" height="1"/><rect x="468" y="576" width="258" height="1"/><rect x="468" y="605" width="258" height="1"/></g>
<rect x="440.500" y="500.500" width="286" height="21" fill="#cfe1f3" stroke="#7aa7d8"/>
<g class="m">
<text x="472" y="515">Make</text><text class="r" x="708" y="515">Alt+Ctrl+B</text>
<text class="d" x="472" y="537">Release</text><text class="d r" x="708" y="537">Alt+Shift+Ctrl+B</text>
<text x="472" y="566">Blend Options...</text>
<text class="d" x="472" y="595">Expand</text>
<text class="d" x="472" y="624">Replace Spine</text>
<text class="d" x="472" y="646">Reverse Spine</text>
<text class="d" x="472" y="668">Reverse Front to Back</text>
</g>
<path d="M543 514L566.500 501V506.500H596.500V521.500H566.500V528Z" fill="none" stroke="#000" stroke-width="3.500"/>
</svg>
</body></html>
